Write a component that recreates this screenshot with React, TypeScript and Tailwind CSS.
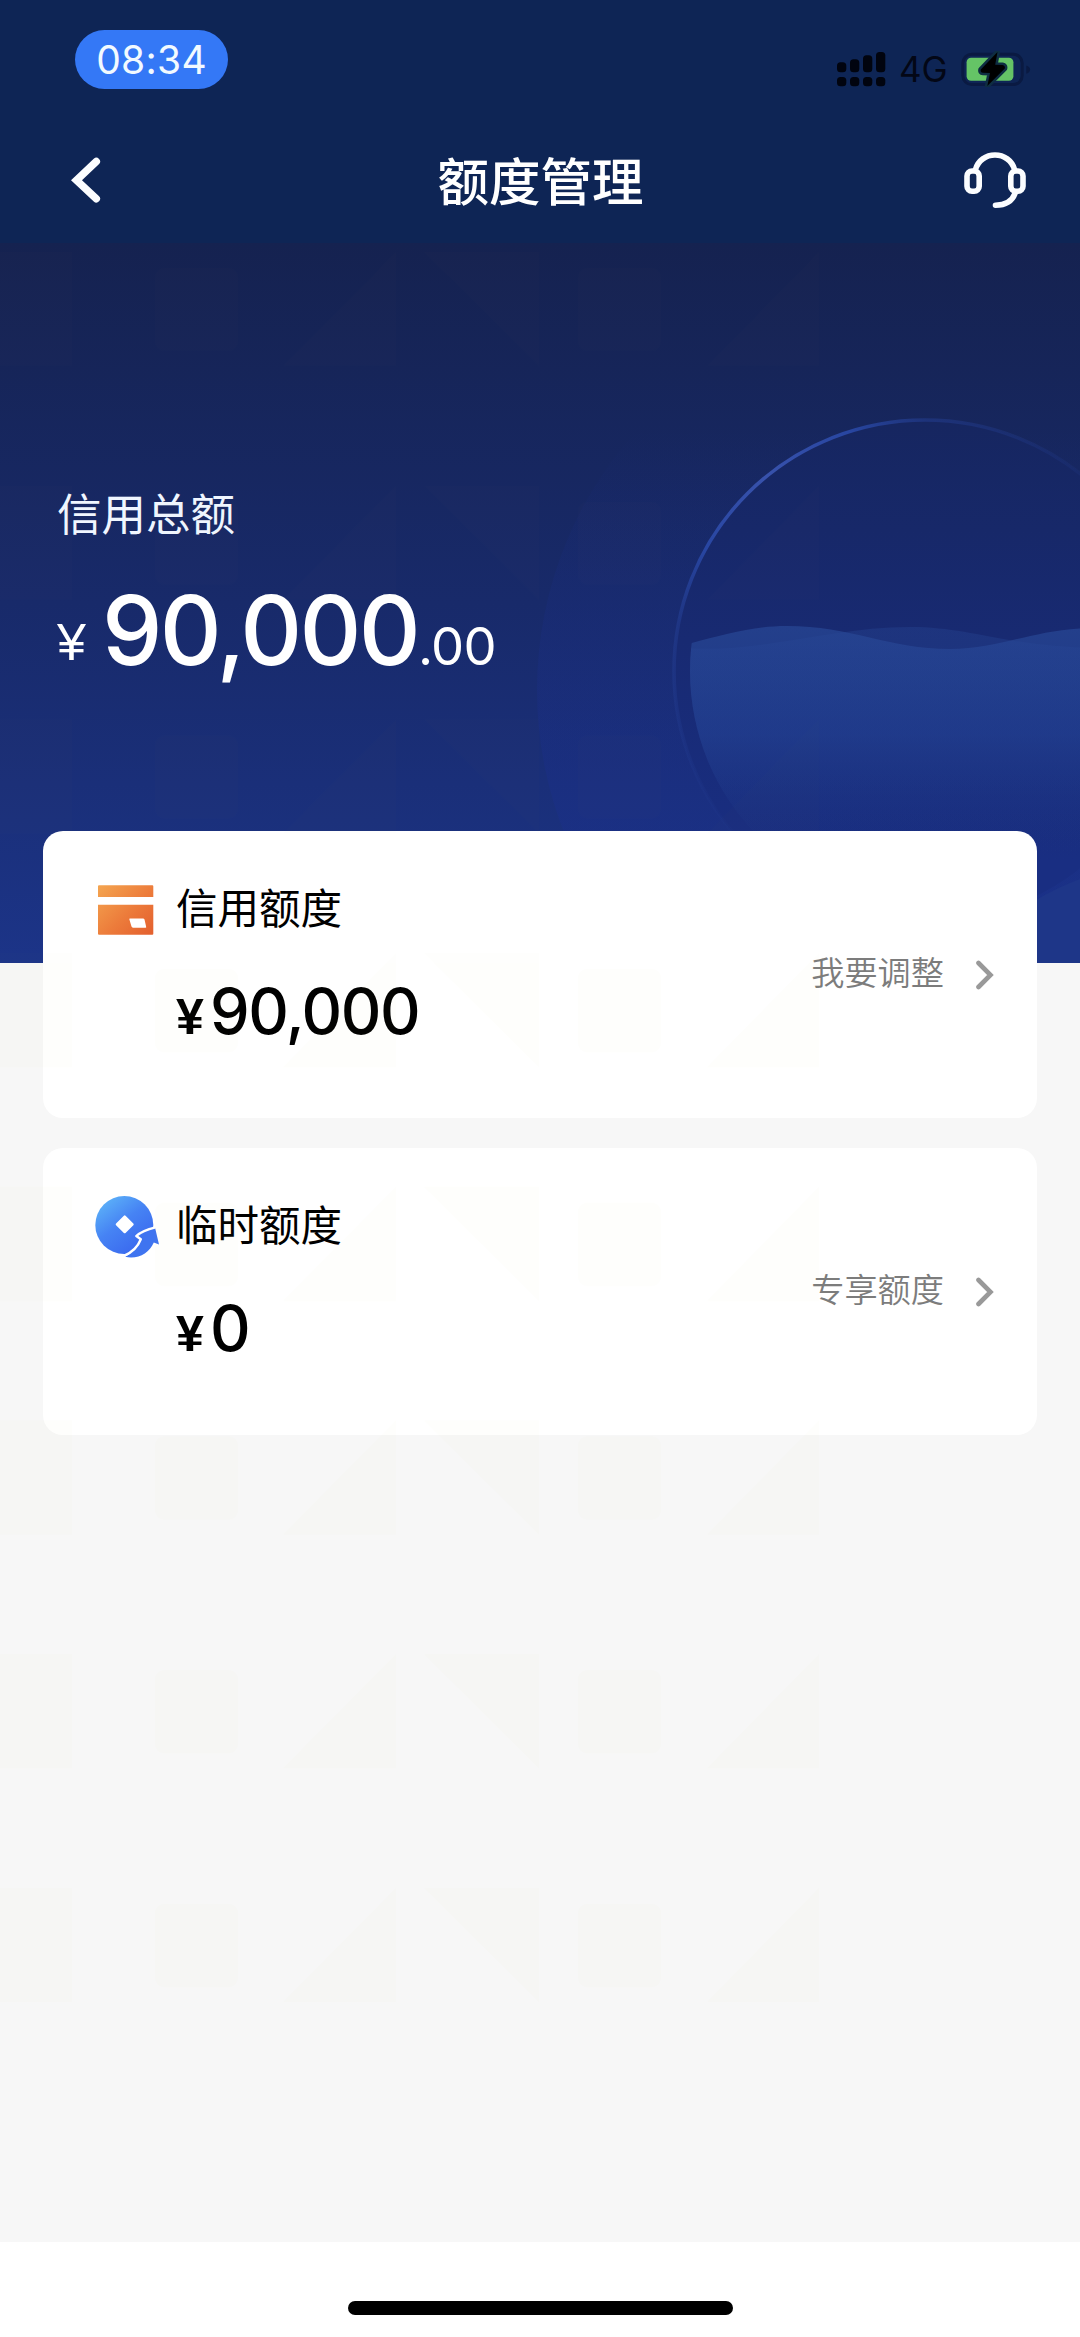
import type { ReactNode } from 'react'

const bars = [
  { x: 0, top: 10.3 },
  { x: 13, top: 7.3 },
  { x: 26, top: 3.3 },
  { x: 39, top: 0 },
]

function SignalIcon() {
  return (
    <svg width="49" height="35" viewBox="0 0 49 35" fill="#01040f">
      {bars.map((b) => (
        <g key={b.x}>
          <rect x={b.x} y={b.top} width="9.3" height={20.3 - b.top} rx="3.5" />
          <rect x={b.x} y="25" width="9.3" height="9.3" rx="3.5" />
        </g>
      ))}
    </svg>
  )
}

function BatteryIcon() {
  return (
    <svg width="70" height="36" viewBox="960 50 70 36" fill="none">
      <rect x="961.8" y="53.2" width="59.4" height="30.4" rx="9" stroke="#0a1a42" strokeWidth="3" />
      <rect x="965.6" y="56.8" width="46.8" height="23" rx="4.5" fill="#65c466" />
      <path d="M1025.3 64.5c2.6.8 3.8 2.3 3.8 4.1s-1.2 3.3-3.8 4.1z" fill="#0a1a42" />
      <path
        d="M996.5 51 979.8 68.5Q979 71.5 982 71.7L989 72 986.3 85 1003.8 67.5Q1004.5 64.5 1001.5 64L994.2 63.7Z"
        fill="#000"
        stroke="#0e2d42"
        strokeWidth="5"
        strokeLinejoin="round"
        paintOrder="stroke"
      />
    </svg>
  )
}

function HeadsetIcon() {
  return (
    <svg width="64" height="58" viewBox="962 151 64 58" fill="none" stroke="#fbfdff" strokeWidth="5.6" strokeLinecap="round">
      <path d="M974.5 169.5C977 160.5 985 155 994 155S1011 160.5 1013.5 169.5" />
      <rect x="966" y="171" width="12.2" height="20.3" rx="5" />
      <rect x="1009.8" y="171" width="12.2" height="20.3" rx="5" />
      <path d="M1014 193.5C1011 201.5 1004 205.2 994.5 205.3" />
    </svg>
  )
}

function CardIcon() {
  return (
    <svg className="ml-[3px]" width="56" height="50" viewBox="98 885 56 50">
      <defs>
        <linearGradient id="orange" x1="0" y1="0" x2="1" y2="0.9">
          <stop offset="0" stopColor="#f4a550" />
          <stop offset="0.6" stopColor="#ec7a3a" />
          <stop offset="1" stopColor="#e4622f" />
        </linearGradient>
      </defs>
      <path
        d="M99 885.3H152.3Q153.3 885.3 153.3 886.3V897H98V886.3Q98 885.3 99 885.3ZM98 904.7H153.3V933.7Q153.3 934.7 152.3 934.7H99Q98 934.7 98 933.7ZM130 918.5Q129 918.5 129.4 919.5L131.5 926.6Q131.9 927.7 133 927.7H145.5Q146.5 927.7 146.1 926.5L144.5 919.5Q144.2 918.5 143 918.5Z"
        fill="url(#orange)"
        fillRule="evenodd"
      />
    </svg>
  )
}

function CoinIcon() {
  return (
    <svg width="66" height="64" viewBox="95 1195 66 64">
      <defs>
        <linearGradient id="blue" x1="0.1" y1="0.1" x2="0.7" y2="0.9">
          <stop offset="0" stopColor="#5cb1f8" />
          <stop offset="0.5" stopColor="#4683f4" />
          <stop offset="1" stopColor="#3b6bef" />
        </linearGradient>
      </defs>
      <circle cx="124.3" cy="1225" r="29" fill="url(#blue)" />
      <path
        d="M124.7 1216.5 132.5 1224.3 124.7 1232.1 116.9 1224.3Z"
        fill="#fff"
        stroke="#fff"
        strokeWidth="2.4"
        strokeLinejoin="round"
      />
      <path
        d="M125 1256.8C134 1252 138.5 1246.5 141 1239.5L136.5 1235.8C141 1232 147 1229.5 155 1227.6L159 1244.5 153.8 1242.5C149 1253.5 138 1259.5 125 1256.8Z"
        fill="#3f74f0"
      />
      <path
        d="M124 1255.8C132 1252.5 138 1246.5 140.8 1239.3L136.3 1236C141 1231.5 147 1229.3 155.5 1227.3"
        fill="none"
        stroke="#fff"
        strokeWidth="2.4"
        strokeLinejoin="round"
      />
    </svg>
  )
}

function Chevron() {
  return (
    <svg className="mt-[2px]" width="18" height="30" viewBox="0 0 18 30" fill="none" stroke="#999" strokeWidth="4.6">
      <path d="M2.5 3 14.5 15 2.5 27" strokeLinecap="round" />
    </svg>
  )
}

/* Glass ball with water, sits behind the total amount */
function HeroArt() {
  return (
    <svg className="absolute inset-0" width="1080" height="720" viewBox="0 243 1080 720" fill="none">
      <defs>
        <radialGradient id="rim" gradientUnits="userSpaceOnUse" cx="765" cy="475" r="380">
          <stop offset="0" stopColor="#3852ac" />
          <stop offset="0.25" stopColor="#2a49a8" stopOpacity="0.9" />
          <stop offset="0.45" stopColor="#26429a" stopOpacity="0.45" />
          <stop offset="1" stopColor="#26429a" stopOpacity="0" />
        </radialGradient>
        <linearGradient id="water" gradientUnits="userSpaceOnUse" x1="0" y1="630" x2="0" y2="860">
          <stop offset="0" stopColor="#284896" />
          <stop offset="0.45" stopColor="#223f90" stopOpacity="0.9" />
          <stop offset="1" stopColor="#1a3080" stopOpacity="0" />
        </linearGradient>
        <linearGradient id="halo" gradientUnits="userSpaceOnUse" x1="0" y1="430" x2="0" y2="900">
          <stop offset="0" stopColor="#1b2f90" stopOpacity="0" />
          <stop offset="0.5" stopColor="#1b2f8c" stopOpacity="0.25" />
          <stop offset="1" stopColor="#1a2f8c" stopOpacity="0.5" />
        </linearGradient>
        <linearGradient id="glass" gradientUnits="userSpaceOnUse" x1="0" y1="420" x2="0" y2="860">
          <stop offset="0" stopColor="#162660" />
          <stop offset="0.5" stopColor="#182a72" />
          <stop offset="1" stopColor="#192e82" />
        </linearGradient>
        <clipPath id="ball">
          <circle cx="925" cy="671" r="235" />
        </clipPath>
      </defs>
      <circle cx="925" cy="690" r="388" fill="url(#halo)" />
      <circle cx="925" cy="671" r="251" fill="url(#glass)" />
      <circle cx="925" cy="671" r="251" stroke="url(#rim)" strokeWidth="3.6" />
      <g clipPath="url(#ball)">
        <path
          d="M680 646C720 636 750 626 787 626C850 626 890 649 950 649C1000 649 1030 630 1090 628V900H680Z"
          fill="url(#water)"
          opacity="0.7"
        />
        <path
          d="M680 648C760 654 830 627 910 627C970 627 1000 645 1090 648V900H680Z"
          fill="url(#water)"
          opacity="0.35"
        />
      </g>
      <path d="M1036 900Q1058 887 1080 879V963H1036Z" fill="#1e3688" />
    </svg>
  )
}

/* Very faint geometric watermark repeated over the whole page */
function Watermark() {
  return (
    <svg className="pointer-events-none absolute inset-0" width="1080" height="2337">
      <defs>
        <pattern id="shapes" patternUnits="userSpaceOnUse" x="0" y="252" width="1080" height="233.7">
          <g fill="#b0b040">
            <path d="M0 0H72V114H0ZM283 114 396 0V114ZM424 0H539V114ZM707 114 819 0V114Z" />
            <rect x="155" y="16" width="83" height="83" rx="9" />
            <rect x="578" y="16" width="83" height="83" rx="9" />
          </g>
        </pattern>
      </defs>
      <rect y="252" width="1080" height="711" fill="url(#shapes)" opacity="0.01" />
      <rect y="963" width="1080" height="1039" fill="url(#shapes)" opacity="0.018" />
    </svg>
  )
}

interface LimitCardProps {
  icon: ReactNode
  title: string
  amount: string
  action: string
}

function LimitCard({ icon, title, amount, action }: LimitCardProps) {
  return (
    <div className="flex h-[287px] items-center justify-between rounded-[20px] bg-white pl-[52px] pr-[43px]">
      <div className="flex h-full flex-col">
        <div className="mt-[47px] flex h-[64px] items-center">
          <div className="flex w-[81px] items-center">{icon}</div>
          <h2 className="mb-[6px] text-[41.5px] leading-none text-black">{title}</h2>
        </div>
        <div className="mt-[34px] flex items-baseline pl-[81px] leading-none text-black">
          <span className="w-[34px] font-['Liberation_Sans',sans-serif] text-[50px] font-bold leading-[70px]">¥</span>
          <span className="font-['Inter',sans-serif] text-[63px] font-medium leading-[70px] tracking-[-1.5px]">{amount}</span>
        </div>
      </div>
      <button className="flex items-center gap-[32px] text-[33.2px] font-[350] leading-none text-[#7c7c7c]">
        <span className="mb-[8px]">{action}</span>
        <Chevron />
      </button>
    </div>
  )
}

export default function App() {
  return (
    <div className="relative flex h-[2337px] w-[1080px] flex-col overflow-hidden bg-[#f7f7f7] font-['Noto_Sans_CJK_SC',sans-serif]">
      <header className="h-[243px] bg-[#0e2555]">
        <div className="flex h-[120px] items-start justify-between pl-[75px] pr-[49px]">
          <div className="mt-[30px] flex h-[59px] w-[153px] items-center justify-center rounded-full bg-[#3478f6] font-['Inter',sans-serif] text-[39px] leading-none tracking-[0.3px] text-[#f2faff]">
            08:34
          </div>
          <div className="mt-[51px] flex items-center">
            <SignalIcon />
            <span className="ml-[13px] w-[62px] font-['Inter',sans-serif] text-[35px] leading-none text-[#030716]">4G</span>
            <BatteryIcon />
          </div>
        </div>
        <div className="grid h-[120px] grid-cols-3 items-center pl-[70px] pr-[53px]">
          <svg width="64" height="50" viewBox="70 155 64 50" fill="none" stroke="#fbfdff" strokeWidth="7.5">
            <path d="M96.3 161.6 76.5 180.2 96.3 198.7" strokeLinecap="round" />
          </svg>
          <h1 className="-ml-[16px] mb-[2px] text-center text-[51.5px] font-medium leading-none text-white">额度管理</h1>
          <div className="justify-self-end">
            <HeadsetIcon />
          </div>
        </div>
      </header>

      <section className="relative h-[720px] shrink-0 bg-linear-to-b from-[#152250] via-[#182a6a] to-[#1c3488]">
        <HeroArt />
        <div className="relative pl-[57px] pt-[247px] text-white">
          <p className="text-[44.5px] leading-none text-[#f0f6ff]">信用总额</p>
          <div className="mt-[47px] flex items-baseline font-['Inter',sans-serif] leading-none">
            <span className="w-[45px] pb-[5px] font-['Liberation_Sans',sans-serif] text-[52px] [baseline-shift:0] relative -top-[5px]">¥</span>
            <span className="text-[96px] font-[480] tracking-[-2.7px]">90,000</span>
            <span className="text-[52.5px] tracking-[-0.8px]">.00</span>
          </div>
        </div>
      </section>

      <main className="relative -mt-[132px] flex flex-1 flex-col gap-[30px] px-[43px]">
        <LimitCard icon={<CardIcon />} title="信用额度" amount="90,000" action="我要调整" />
        <LimitCard icon={<CoinIcon />} title="临时额度" amount="0" action="专享额度" />
      </main>

      <footer className="flex h-[95px] justify-center bg-white pt-[59px]">
        <div className="h-[14px] w-[385px] rounded-full bg-black" />
      </footer>
      <Watermark />
    </div>
  )
}
